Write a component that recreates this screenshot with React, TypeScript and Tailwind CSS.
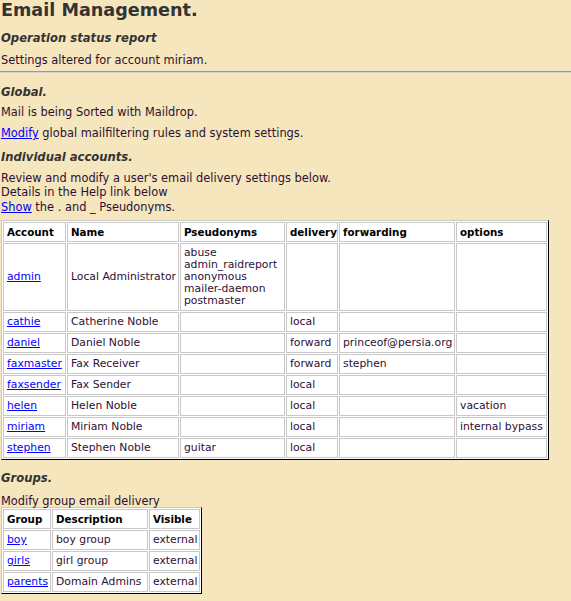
import React from 'react';

type Account = {
  id: string;
  name: string;
  pseudonyms: string[];
  delivery: string;
  forwarding: string;
  options: string;
};

const accounts: Account[] = [
  {
    id: 'admin',
    name: 'Local Administrator',
    pseudonyms: ['abuse', 'admin_raidreport', 'anonymous', 'mailer-daemon', 'postmaster'],
    delivery: '',
    forwarding: '',
    options: '',
  },
  { id: 'cathie', name: 'Catherine Noble', pseudonyms: [], delivery: 'local', forwarding: '', options: '' },
  { id: 'daniel', name: 'Daniel Noble', pseudonyms: [], delivery: 'forward', forwarding: 'princeof@persia.org', options: '' },
  { id: 'faxmaster', name: 'Fax Receiver', pseudonyms: [], delivery: 'forward', forwarding: 'stephen', options: '' },
  { id: 'faxsender', name: 'Fax Sender', pseudonyms: [], delivery: 'local', forwarding: '', options: '' },
  { id: 'helen', name: 'Helen Noble', pseudonyms: [], delivery: 'local', forwarding: '', options: 'vacation' },
  { id: 'miriam', name: 'Miriam Noble', pseudonyms: [], delivery: 'local', forwarding: '', options: 'internal bypass' },
  { id: 'stephen', name: 'Stephen Noble', pseudonyms: ['guitar'], delivery: 'local', forwarding: '', options: '' },
];

const groups = [
  { id: 'boy', description: 'boy group', visible: 'external' },
  { id: 'girls', description: 'girl group', visible: 'external' },
  { id: 'parents', description: 'Domain Admins', visible: 'external' },
];

const cell = 'border border-[#c8c8c8] bg-white p-[3px] align-middle text-left whitespace-nowrap overflow-hidden';
const body = cell + ' text-[10.8px]';
const head = cell + ' text-[10.3px] font-bold text-black';
const link = 'text-[#0000ff] underline';
const tableCls =
  'border-separate border-spacing-[1px] bg-white border border-t-[#c8c8c8] border-l-[#c8c8c8] border-r-black border-b-black leading-[12px]';
const heading = 'text-[11.6px] leading-[16px] font-bold italic text-[#333333]';

export default function App() {
  return (
    <div className="min-h-screen bg-[#f5e6bd] font-['DejaVu_Sans',Verdana,sans-serif] text-[11.4px] text-[#2e0f33] pl-[1px]">
      <h1 className="text-[17.6px] leading-[20px] font-bold text-[#333333]">Email Management.</h1>

      <h2 className={'mt-[10px] ' + heading}>Operation status report</h2>
      <p className="mt-[7px] leading-[14px]">Settings altered for account miriam.</p>

      <div className="-ml-[1px] mt-[4px] h-[2px] border-t border-b border-t-[#9a9a9a] border-b-[#d4d4d4]" />

      <h2 className={'mt-[11px] ' + heading}>Global.</h2>
      <p className="mt-[5px] leading-[14px]">Mail is being Sorted with Maildrop.</p>
      <p className="mt-[7px] leading-[14px]">
        <a href="#" className={link}>Modify</a> global mailfiltering rules and system settings.
      </p>

      <h2 className={'mt-[9px] ' + heading}>Individual accounts.</h2>
      <p className="mt-[6px] leading-[14px]">
        Review and modify a user's email delivery settings below.
        <br />
        Details in the Help link below
      </p>
      <p className="mt-[1px] leading-[14px]">
        <a href="#" className={link}>Show</a> the . and _ Pseudonyms.
      </p>

      <table className={'mt-[6px] table-fixed w-[548px] ' + tableCls}>
        <colgroup>
          <col className="w-[63px]" />
          <col className="w-[112px]" />
          <col className="w-[105px]" />
          <col className="w-[52px]" />
          <col className="w-[116px]" />
          <col className="w-[91px]" />
        </colgroup>
        <thead>
          <tr>
            <th className={head}>Account</th>
            <th className={head}>Name</th>
            <th className={head}>Pseudonyms</th>
            <th className={head}>delivery</th>
            <th className={head}>forwarding</th>
            <th className={head}>options</th>
          </tr>
        </thead>
        <tbody>
          {accounts.map((a) => (
            <tr key={a.id}>
              <td className={body}>
                <a href="#" className={link}>{a.id}</a>
              </td>
              <td className={body}>{a.name}</td>
              <td className={body}>
                {a.pseudonyms.map((p) => (
                  <div key={p}>{p}</div>
                ))}
              </td>
              <td className={body}>{a.delivery}</td>
              <td className={body}>{a.forwarding}</td>
              <td className={body}>{a.options}</td>
            </tr>
          ))}
        </tbody>
      </table>

      <h2 className={'mt-[10px] ' + heading}>Groups.</h2>
      <p className="mt-[9px] leading-[12px]">Modify group email delivery</p>

      <table className={'mt-[0px] table-fixed w-[200px] ' + tableCls}>
        <colgroup>
          <col className="w-[48px]" />
          <col className="w-[96px]" />
          <col className="w-[51px]" />
        </colgroup>
        <thead>
          <tr>
            <th className={head}>Group</th>
            <th className={head}>Description</th>
            <th className={head}>Visible</th>
          </tr>
        </thead>
        <tbody>
          {groups.map((g) => (
            <tr key={g.id}>
              <td className={body}>
                <a href="#" className={link}>{g.id}</a>
              </td>
              <td className={body}>{g.description}</td>
              <td className={body}>{g.visible}</td>
            </tr>
          ))}
        </tbody>
      </table>
    </div>
  );
}
